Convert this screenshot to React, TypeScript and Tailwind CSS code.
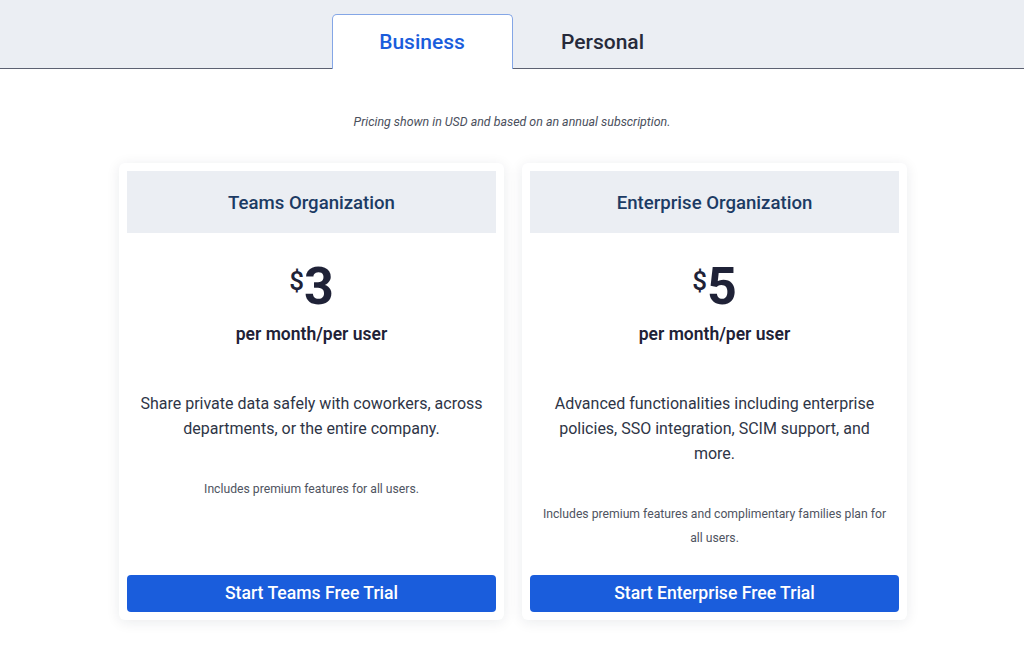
import React from 'react';

type Plan = {
  title: string;
  price: string;
  blurb: string[];
  note: string[];
  cta: string;
};

const plans: Plan[] = [
  {
    title: 'Teams Organization',
    price: '3',
    blurb: ['Share private data safely with coworkers, across', 'departments, or the entire company.'],
    note: ['Includes premium features for all users.'],
    cta: 'Start Teams Free Trial',
  },
  {
    title: 'Enterprise Organization',
    price: '5',
    blurb: ['Advanced functionalities including enterprise', 'policies, SSO integration, SCIM support, and', 'more.'],
    note: ['Includes premium features and complimentary families plan for', 'all users.'],
    cta: 'Start Enterprise Free Trial',
  },
];

function Lines({ lines }: { lines: string[] }) {
  return (
    <>
      {lines.map((l, i) => (
        <span key={i} className="block whitespace-nowrap">
          {l}
        </span>
      ))}
    </>
  );
}

function PlanCard({ plan }: { plan: Plan }) {
  return (
    <div className="flex w-[385px] flex-col rounded-md bg-white p-2 shadow-[0_2px_14px_rgba(20,30,60,0.09)]">
      <div className="flex h-[62px] items-center justify-center bg-[#ebeef3] pt-[3px] text-[18.6px] font-medium text-[#1c3b64]">
        {plan.title}
      </div>

      <div className="mt-[28px] flex justify-center text-[#1f2237]">
        <span className="mt-[7px] text-[26px] leading-none font-medium">$</span>
        <span className="text-[52px] leading-[52px] font-bold">{plan.price}</span>
      </div>

      <div className="mt-[9px] text-center text-[17.5px] leading-[24px] font-semibold text-[#1f2237]">
        per month/per user
      </div>

      <p className="mt-[45px] text-center text-[16px] leading-[25px] text-[#2e3546]">
        <Lines lines={plan.blurb} />
      </p>

      <p className="mt-9 text-center text-[12.2px] leading-[24px] text-[#4f5461]">
        <Lines lines={plan.note} />
      </p>

      <div className="mt-auto pt-[25px]">
        <button className="h-[37px] w-full rounded-[4px] bg-[#1a5ddc] text-[17.6px] font-medium text-white">
          {plan.cta}
        </button>
      </div>
    </div>
  );
}

export default function App() {
  return (
    <div className="min-h-screen bg-white font-['Roboto',sans-serif]">
      <div className="flex h-[69px] items-end justify-center border-b border-[#5c6171] bg-[#ebeef3]">
        <div className="-mb-px flex">
          <button className="h-[55px] w-[181px] rounded-t-[5px] border border-b-0 border-[#84a6e6] bg-white pt-[2px] text-[21px] font-medium text-[#1a5ddc]">
            Business
          </button>
          <button className="h-[55px] w-[180px] pt-[2px] text-[21px] font-medium text-[#262a3a]">
            Personal
          </button>
        </div>
      </div>

      <p className="mt-[45px] text-center text-[12.4px] leading-[16px] italic text-[#4a4f5c]">
        Pricing shown in USD and based on an annual subscription.
      </p>

      <div className="mt-[33px] flex justify-center gap-[18px] pl-[2px]">
        {plans.map((p) => (
          <PlanCard key={p.title} plan={p} />
        ))}
      </div>
    </div>
  );
}
